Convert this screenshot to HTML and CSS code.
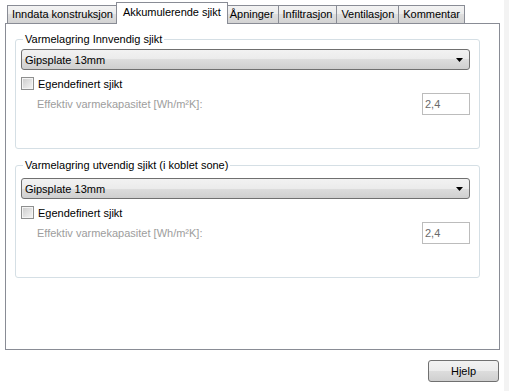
FILE: index.html
```html
<!DOCTYPE html>
<html lang="no">
<head>
    <meta charset="UTF-8">
    <title>Akkumulerende sjikt</title>
    <link rel="stylesheet" href="styles.css">
</head>
<body>
    <div class="window">
        <div class="tabs">
            <div class="tab">Inndata konstruksjon</div>
            <div class="tab active">Akkumulerende sjikt</div>
            <div class="tab">Åpninger</div>
            <div class="tab">Infiltrasjon</div>
            <div class="tab">Ventilasjon</div>
            <div class="tab">Kommentar</div>
        </div>
        <div class="panel">
            <div class="group">
                <div class="group-title">Varmelagring Innvendig sjikt</div>
                <div class="combo">
                    <span>Gipsplate 13mm</span>
                    <svg width="7" height="4" viewBox="0 0 7 4"><polygon points="0,0 7,0 3.5,4" fill="#000"/></svg>
                </div>
                <div class="check"><span class="box"></span>Egendefinert sjikt</div>
                <div class="field">
                    <span class="field-label">Effektiv varmekapasitet [Wh/m²K]:</span>
                    <span class="input">2,4</span>
                </div>
            </div>
            <div class="group second">
                <div class="group-title">Varmelagring utvendig sjikt (i koblet sone)</div>
                <div class="combo">
                    <span>Gipsplate 13mm</span>
                    <svg width="7" height="4" viewBox="0 0 7 4"><polygon points="0,0 7,0 3.5,4" fill="#000"/></svg>
                </div>
                <div class="check"><span class="box"></span>Egendefinert sjikt</div>
                <div class="field">
                    <span class="field-label">Effektiv varmekapasitet [Wh/m²K]:</span>
                    <span class="input">2,4</span>
                </div>
            </div>
        </div>
        <div class="footer">
            <button class="btn">Hjelp</button>
        </div>
    </div>
</body>
</html>
```

FILE: styles.css
```css
* {
    box-sizing: border-box;
}
body {
    margin: 0;
    background: #fff;
    font-family: "Liberation Sans", Arial, sans-serif;
    font-size: 11px;
    color: #000;
}
.window {
    width: 509px;
    height: 391px;
    border-right: 5px solid #f3f3f3;
}
.tabs {
    display: flex;
    align-items: flex-end;
    height: 23px;
    padding-left: 8px;
}
.tab {
    height: 18px;
    line-height: 16px;
    padding: 0 4px;
    margin-left: -1px;
    border: 1px solid #898c95;
    border-bottom: none;
    background: linear-gradient(#f3f3f3, #ebebeb 50%, #dedede 50%, #d3d3d3);
    white-space: nowrap;
    letter-spacing: -0.03px;
}
.tab.active {
    position: relative;
    z-index: 1;
    height: 22px;
    line-height: 18px;
    padding: 0 6px;
    margin: 0 -2px -1px -2px;
    background: #fff;
}
.panel {
    width: 495px;
    height: 327px;
    margin-left: 5px;
    border: 1px solid #898c95;
    padding: 15px 19px 0 9px;
}
.group {
    border: 1px solid #d5dfe5;
    border-radius: 3px;
    padding: 0 9px 33px 5px;
}
.group.second {
    margin-top: 16px;
}
.group-title {
    width: fit-content;
    height: 13px;
    line-height: 13px;
    margin: -7px 0 0 2px;
    padding: 0 2px;
    background: #fff;
}
.combo {
    display: flex;
    align-items: center;
    justify-content: space-between;
    height: 21px;
    margin-top: 3px;
    padding: 0 6px 0 3px;
    border: 1px solid #707070;
    border-radius: 3px;
    background: linear-gradient(#f2f2f2, #ebebeb 50%, #dddddd 50%, #cfcfcf);
}
.second .combo {
    margin-top: 6px;
}
.check {
    display: flex;
    align-items: center;
    gap: 4px;
    height: 13px;
    margin-top: 7px;
}
.box {
    width: 13px;
    height: 13px;
    border: 1px solid #8e8f8f;
    box-shadow: inset 0 0 0 1px #f4f4f4;
    background: linear-gradient(135deg, #cbcbcb, #f6f6f6);
}
.field {
    display: flex;
    align-items: center;
    justify-content: space-between;
    height: 22px;
    margin-top: 3px;
    padding-left: 16px;
}
.field-label {
    color: #9d9d9d;
}
.input {
    width: 48px;
    height: 22px;
    line-height: 20px;
    padding-left: 2px;
    border: 1px solid #bcbcbc;
    color: #6a6a6a;
    background: #fff;
}
.footer {
    display: flex;
    justify-content: flex-end;
    padding: 10px 5px 0 0;
}
.btn {
    width: 71px;
    height: 22px;
    border: 1px solid #707070;
    border-radius: 3px;
    background: linear-gradient(#f2f2f2, #ebebeb 50%, #dddddd 50%, #cfcfcf);
    font-family: "Liberation Sans", Arial, sans-serif;
    font-size: 11px;
    color: #000;
    padding: 0;
}
```
